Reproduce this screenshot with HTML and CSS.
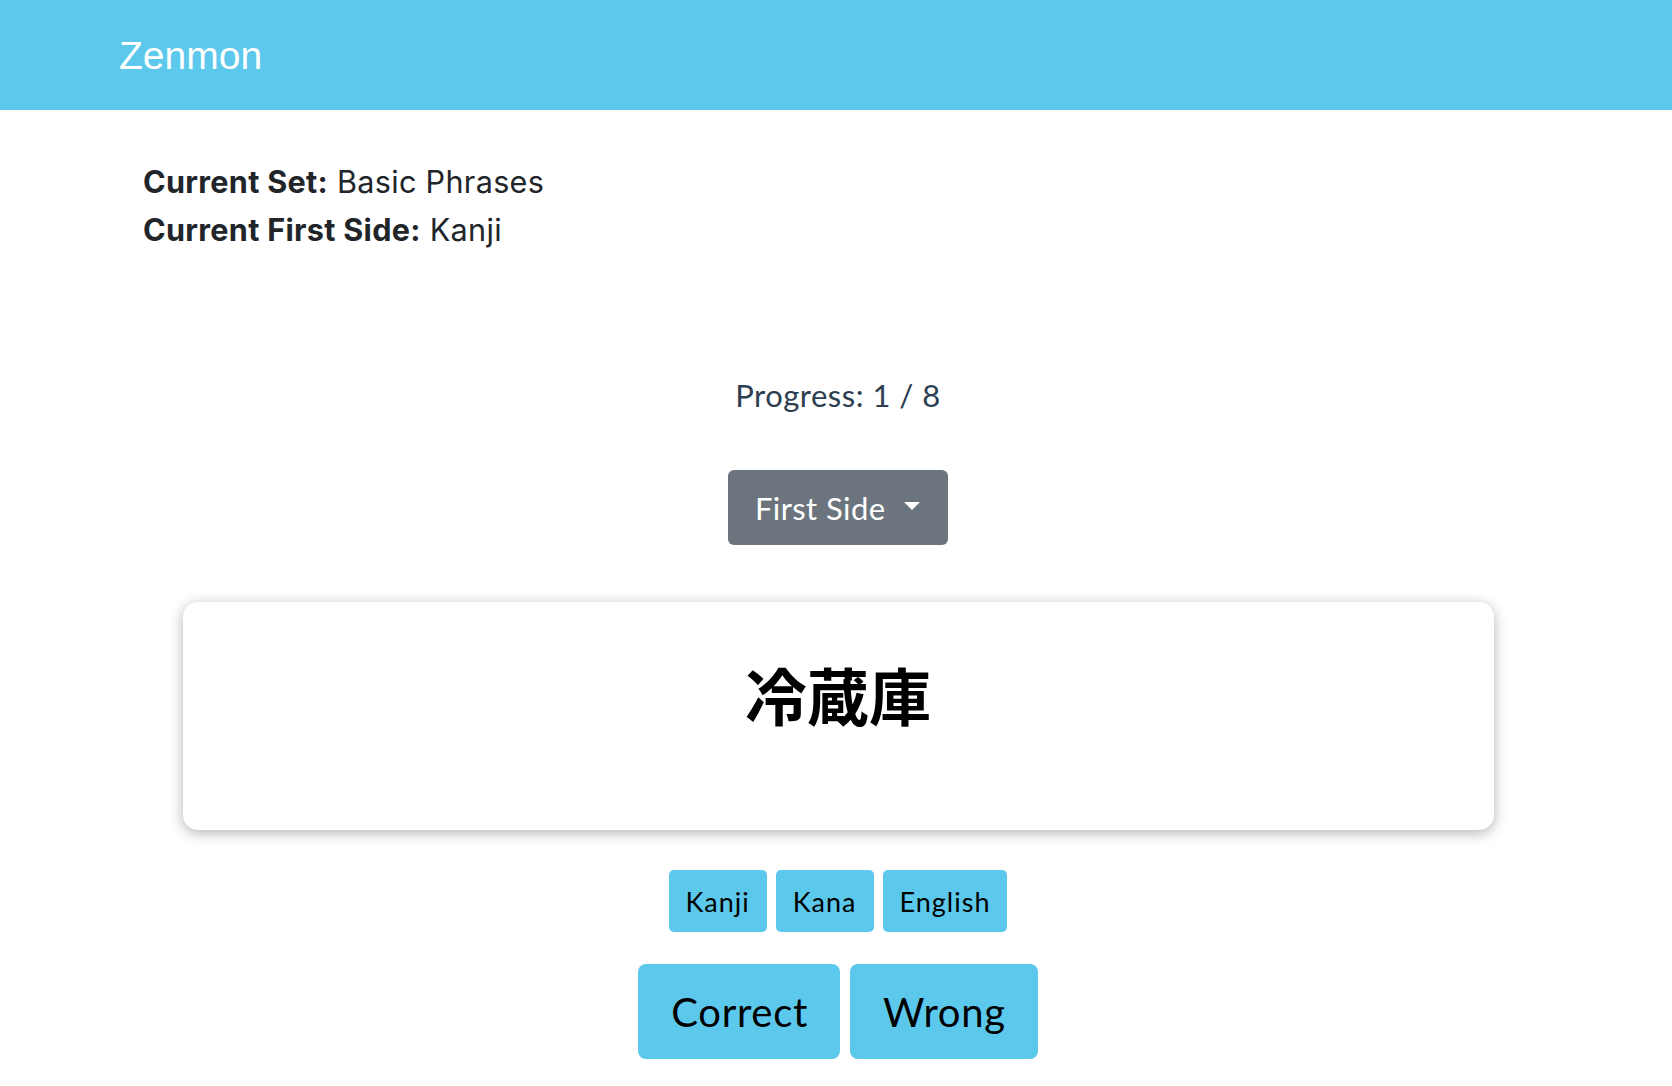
FILE: index.html
```html
<!DOCTYPE html>
<html lang="en">
<head>
<meta charset="utf-8">
<title>Zenmon</title>
<link rel="stylesheet" href="styles.css">
</head>
<body>
<header class="navbar">
  <span class="brand">Zenmon</span>
</header>
<section class="info">
  <div class="info-line"><b>Current Set:</b> Basic Phrases</div>
  <div class="info-line"><b>Current First Side:</b> Kanji</div>
</section>
<main class="study">
  <div class="progress">Progress: 1 / 8</div>
  <button class="dropdown">First Side<span class="caret"></span></button>
  <div class="card">
    <h1 class="term" lang="ja">冷蔵庫</h1>
  </div>
  <div class="side-row">
    <button class="btn btn-sm">Kanji</button>
    <button class="btn btn-sm">Kana</button>
    <button class="btn btn-sm">English</button>
  </div>
  <div class="answer-row">
    <button class="btn btn-lg btn-correct">Correct</button>
    <button class="btn btn-lg btn-wrong">Wrong</button>
  </div>
</main>
</body>
</html>
```

FILE: styles.css
```css
* { box-sizing: border-box; }
html, body { margin: 0; padding: 0; background: #fff; }
body { font-family: "Lato", "Open Sans", sans-serif; }

.navbar {
  height: 110px;
  background: #5bc8ec;
  display: flex;
  align-items: center;
  padding-left: 119px;
}
.brand {
  font-family: "Liberation Sans", Arial, sans-serif;
  font-size: 39px;
  color: #fff;
  line-height: 1;
  margin-top: 1px;
}

.info {
  margin-top: 48px;
  padding-left: 143px;
  font-family: "Inter", "Liberation Sans", sans-serif;
  font-size: 30.6px;
  letter-spacing: 0.3px;
  line-height: 48px;
  color: #212529;
}
.info b { font-weight: 700; }

.study {
  display: flex;
  flex-direction: column;
  align-items: center;
  padding-left: 4px;
}

.progress {
  margin-top: 123px;
  font-size: 31px;
  letter-spacing: 0.5px;
  line-height: 37px;
  color: #2c3e50;
}

.dropdown {
  margin-top: 56px;
  height: 75px;
  width: 220px;
  background: #6c757d;
  border: none;
  border-radius: 6px;
  color: #fff;
  font-family: "Lato", sans-serif;
  font-size: 31px;
  letter-spacing: 0.4px;
  display: flex;
  align-items: center;
  padding: 0 0 0 27px;
}
.caret {
  display: inline-block;
  width: 0;
  height: 0;
  margin-left: 19px;
  border-left: 8px solid transparent;
  border-right: 8px solid transparent;
  border-top: 8px solid #fff;
  margin-top: -4px;
}

.card {
  margin-top: 57px;
  width: 1311px;
  height: 228px;
  background: #fff;
  border-radius: 15px;
  box-shadow: 0 3px 14px rgba(0, 0, 0, 0.3);
  padding-top: 56px;
  text-align: center;
}
.term {
  margin: 0;
  font-family: "Noto Sans CJK JP", "Noto Sans CJK SC", sans-serif;
  font-weight: 700;
  font-size: 62px;
  line-height: 72px;
  color: #000;
}

.btn {
  background: #5bc8ec;
  border: none;
  color: #000;
  font-family: "Lato", sans-serif;
  padding: 0;
}
.side-row {
  margin-top: 40px;
  display: flex;
  gap: 9px;
}
.btn-sm {
  height: 62px;
  font-size: 27px;
  letter-spacing: 1px;
  border-radius: 5px;
  padding: 0 17px;
}
.answer-row {
  margin-top: 32px;
  display: flex;
  gap: 10px;
}
.btn-lg {
  height: 95px;
  font-size: 40px;
  letter-spacing: 0.7px;
  border-radius: 8px;
  padding: 0 32px 0 33px;
}
```
